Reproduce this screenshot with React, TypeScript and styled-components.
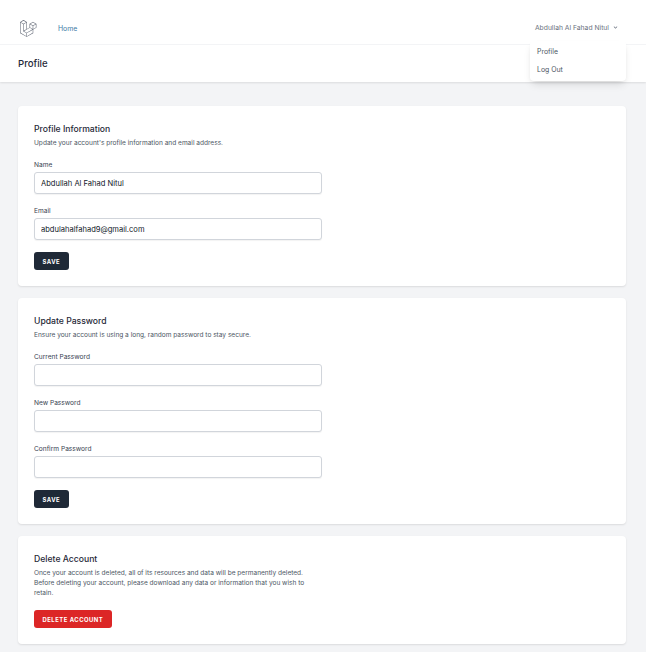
import React from 'react'
import styled, { createGlobalStyle } from 'styled-components'

const GlobalStyle = createGlobalStyle`
    html, body {
        margin: 0;
        background: #f3f4f6;
        font-family: Inter, "Noto Sans", "Liberation Sans", sans-serif;
    }
    * { box-sizing: border-box; }
`

const Nav = styled.nav`
    position: relative;
    display: flex;
    align-items: center;
    justify-content: space-between;
    height: 45px;
    padding: 12px 27px 0 18px;
    background: #fff;
    border-bottom: 1px solid #f3f4f6;
`

const NavLeft = styled.div`
    display: flex;
    align-items: center;
    gap: 21px;
`

const Logo = styled.svg`
    width: 19px;
    height: 19px;
    color: #5b6270;
    fill: currentColor;
    display: block;
`

const HomeLink = styled.a`
    font-size: 6.9px;
    color: #3f7ca6;
`

const UserButton = styled.div`
    display: flex;
    align-items: center;
    gap: 3px;
    margin-bottom: 2px;
    font-size: 6.75px;
    color: #6b7280;
`

const Menu = styled.div`
    position: absolute;
    top: 41px;
    right: 20px;
    width: 96px;
    height: 40px;
    padding: 1px 0;
    background: #fff;
    border-radius: 4px;
    box-shadow: 0 5px 8px -2px rgba(0, 0, 0, 0.12), 0 2px 4px -2px rgba(0, 0, 0, 0.1);
    z-index: 2;
`

const MenuItem = styled.div`
    display: flex;
    align-items: center;
    height: 18px;
    padding-left: 7px;
    font-size: 6.9px;
    color: #4b5563;
`

const PageHeader = styled.header`
    height: 37px;
    padding: 0 0 1px 18px;
    display: flex;
    align-items: center;
    background: #fff;
    box-shadow: 0 1px 2px rgba(0, 0, 0, 0.1);
`

const PageTitle = styled.h2`
    margin: 0;
    font-size: 9.6px;
    font-weight: 500;
    color: #1f2937;
`

const Main = styled.main`
    display: flex;
    flex-direction: column;
    gap: 12px;
    padding: 24px 20px 8px 18px;
`

const Card = styled.section<{ $height: number }>`
    height: ${p => p.$height}px;
    padding: 16px;
    background: #fff;
    border-radius: 4px;
    box-shadow: 0 1px 2px rgba(0, 0, 0, 0.1);
`

const CardTitle = styled.h3`
    margin: 0;
    font-size: 8.65px;
    line-height: 14px;
    font-weight: 500;
    color: #1f2937;
`

const CardText = styled.p`
    margin: 2px 0 0;
    width: 288px;
    font-size: 6.55px;
    line-height: 10px;
    color: #4b5563;
`

const Form = styled.div`
    display: flex;
    flex-direction: column;
    gap: 12px;
    margin-top: 12px;
`

const Field = styled.label`
    display: flex;
    flex-direction: column;
    gap: 2px;
`

const FieldLabel = styled.span`
    font-size: 6.6px;
    line-height: 10px;
    font-weight: 400;
    color: #374151;
`

const Input = styled.input`
    width: 288px;
    height: 22px;
    padding: 0 6px;
    border: 1px solid #d1d5db;
    border-radius: 3px;
    background: #fff;
    box-shadow: 0 1px 1px rgba(0, 0, 0, 0.05);
    font-family: inherit;
    font-size: 7.55px;
    color: #111827;
    outline: none;
`

const Button = styled.button<{ $danger?: boolean }>`
    align-self: flex-start;
    height: 18px;
    padding: 0 8.5px;
    border: 0;
    border-radius: 3px;
    background: ${p => (p.$danger ? '#dc2626' : '#1f2937')};
    color: #fff;
    font-family: inherit;
    font-size: 5.9px;
    font-weight: 700;
    letter-spacing: 0.5px;
    text-transform: uppercase;
`

const DangerButton = styled(Button)`
    display: block;
    margin-top: 12px;
`

const Chevron = () => (
    <svg width="7" height="7" viewBox="0 0 20 20" fill="currentColor">
        <path fillRule="evenodd" clipRule="evenodd" d="M5.293 7.293a1 1 0 011.414 0L10 10.586l3.293-3.293a1 1 0 111.414 1.414l-4 4a1 1 0 01-1.414 0l-4-4a1 1 0 010-1.414z" />
    </svg>
)

const App = () => {
    return (
        <>
            <GlobalStyle />
            <Nav>
                <NavLeft>
                    <Logo viewBox="0 0 316 316">
                        <path d="M305.8 81.125C305.77 80.995 305.69 80.885 305.65 80.755C305.56 80.525 305.49 80.285 305.37 80.075C305.29 79.935 305.17 79.815 305.07 79.685C304.94 79.515 304.83 79.325 304.68 79.175C304.55 79.045 304.39 78.955 304.25 78.845C304.09 78.715 303.95 78.575 303.77 78.475L251.32 48.275C249.97 47.495 248.31 47.495 246.96 48.275L194.51 78.475C194.33 78.575 194.19 78.725 194.03 78.845C193.89 78.955 193.73 79.045 193.6 79.175C193.45 79.325 193.34 79.515 193.21 79.685C193.11 79.815 192.99 79.935 192.91 80.075C192.79 80.295 192.71 80.525 192.63 80.755C192.58 80.875 192.51 80.995 192.48 81.125C192.38 81.495 192.33 81.875 192.33 82.265V139.625L148.62 164.795V52.575C148.62 52.185 148.57 51.805 148.47 51.435C148.44 51.305 148.36 51.195 148.32 51.065C148.23 50.835 148.16 50.595 148.04 50.385C147.96 50.245 147.84 50.125 147.74 49.995C147.61 49.825 147.5 49.635 147.35 49.485C147.22 49.355 147.06 49.265 146.92 49.155C146.76 49.025 146.62 48.885 146.44 48.785L93.99 18.585C92.64 17.805 90.98 17.805 89.63 18.585L37.18 48.785C37 48.885 36.86 49.035 36.7 49.155C36.56 49.265 36.4 49.355 36.27 49.485C36.12 49.635 36.01 49.825 35.88 49.995C35.78 50.125 35.66 50.245 35.58 50.385C35.46 50.605 35.38 50.835 35.3 51.065C35.25 51.185 35.18 51.305 35.15 51.435C35.05 51.805 35 52.185 35 52.575V232.235C35 233.795 35.84 235.245 37.19 236.025L142.1 296.425C142.33 296.555 142.58 296.635 142.83 296.725C142.95 296.765 143.06 296.835 143.18 296.865C143.55 296.965 143.93 297.015 144.31 297.015C144.69 297.015 145.07 296.965 145.44 296.865C145.55 296.835 145.65 296.775 145.76 296.735C146.02 296.645 146.28 296.565 146.52 296.435L251.43 236.035C252.78 235.255 253.62 233.815 253.62 232.245V174.885L303.81 145.985C305.17 145.205 306 143.755 306 142.195V82.265C305.95 81.875 305.89 81.495 305.8 81.125ZM144.2 227.205L100.57 202.515L146.39 176.135L196.66 147.195L240.33 172.335L208.29 190.625L144.2 227.205ZM244.75 114.995V164.795L226.39 154.225L201.03 139.625V89.825L219.39 100.395L244.75 114.995ZM249.12 57.105L292.81 82.265L249.12 107.425L205.43 82.265L249.12 57.105ZM114.49 184.425L96.13 194.995V85.305L121.49 70.705L139.85 60.135V169.815L114.49 184.425ZM91.76 27.425L135.45 52.585L91.76 77.745L48.07 52.585L91.76 27.425ZM43.67 60.135L62.03 70.705L87.39 85.305V202.545V202.555V202.565C87.39 202.735 87.44 202.895 87.46 203.055C87.49 203.265 87.49 203.485 87.55 203.695V203.705C87.6 203.875 87.69 204.035 87.76 204.195C87.84 204.375 87.89 204.575 87.99 204.745C87.99 204.745 87.99 204.755 88 204.755C88.09 204.905 88.22 205.035 88.33 205.175C88.45 205.335 88.55 205.495 88.69 205.635L88.7 205.645C88.82 205.765 88.98 205.855 89.12 205.965C89.28 206.085 89.42 206.225 89.59 206.325C89.6 206.325 89.6 206.325 89.61 206.335C89.62 206.335 89.62 206.345 89.63 206.345L139.87 234.775V285.065L43.67 229.705V60.135ZM244.75 229.705L148.58 285.075V234.775L219.8 194.115L244.75 179.875V229.705ZM297.2 139.625L253.49 164.795V114.995L278.85 100.395L297.21 89.825V139.625H297.2Z" />
                    </Logo>
                    <HomeLink>Home</HomeLink>
                </NavLeft>
                <UserButton>
                    Abdullah Al Fahad Nitul
                    <Chevron />
                </UserButton>
                <Menu>
                    <MenuItem>Profile</MenuItem>
                    <MenuItem>Log Out</MenuItem>
                </Menu>
            </Nav>
            <PageHeader>
                <PageTitle>Profile</PageTitle>
            </PageHeader>
            <Main>
                <Card $height={180}>
                    <CardTitle>Profile Information</CardTitle>
                    <CardText>Update your account's profile information and email address.</CardText>
                    <Form>
                        <Field>
                            <FieldLabel>Name</FieldLabel>
                            <Input readOnly value="Abdullah Al Fahad Nitul" />
                        </Field>
                        <Field>
                            <FieldLabel>Email</FieldLabel>
                            <Input readOnly value="abdulahalfahad9@gmail.com" />
                        </Field>
                        <Button>Save</Button>
                    </Form>
                </Card>
                <Card $height={226}>
                    <CardTitle>Update Password</CardTitle>
                    <CardText>Ensure your account is using a long, random password to stay secure.</CardText>
                    <Form>
                        <Field>
                            <FieldLabel>Current Password</FieldLabel>
                            <Input readOnly />
                        </Field>
                        <Field>
                            <FieldLabel>New Password</FieldLabel>
                            <Input readOnly />
                        </Field>
                        <Field>
                            <FieldLabel>Confirm Password</FieldLabel>
                            <Input readOnly />
                        </Field>
                        <Button>Save</Button>
                    </Form>
                </Card>
                <Card $height={108}>
                    <CardTitle>Delete Account</CardTitle>
                    <CardText>Once your account is deleted, all of its resources and data will be permanently deleted. Before deleting your account, please download any data or information that you wish to retain.</CardText>
                    <DangerButton $danger>Delete Account</DangerButton>
                </Card>
            </Main>
        </>
    )
}

export default App
